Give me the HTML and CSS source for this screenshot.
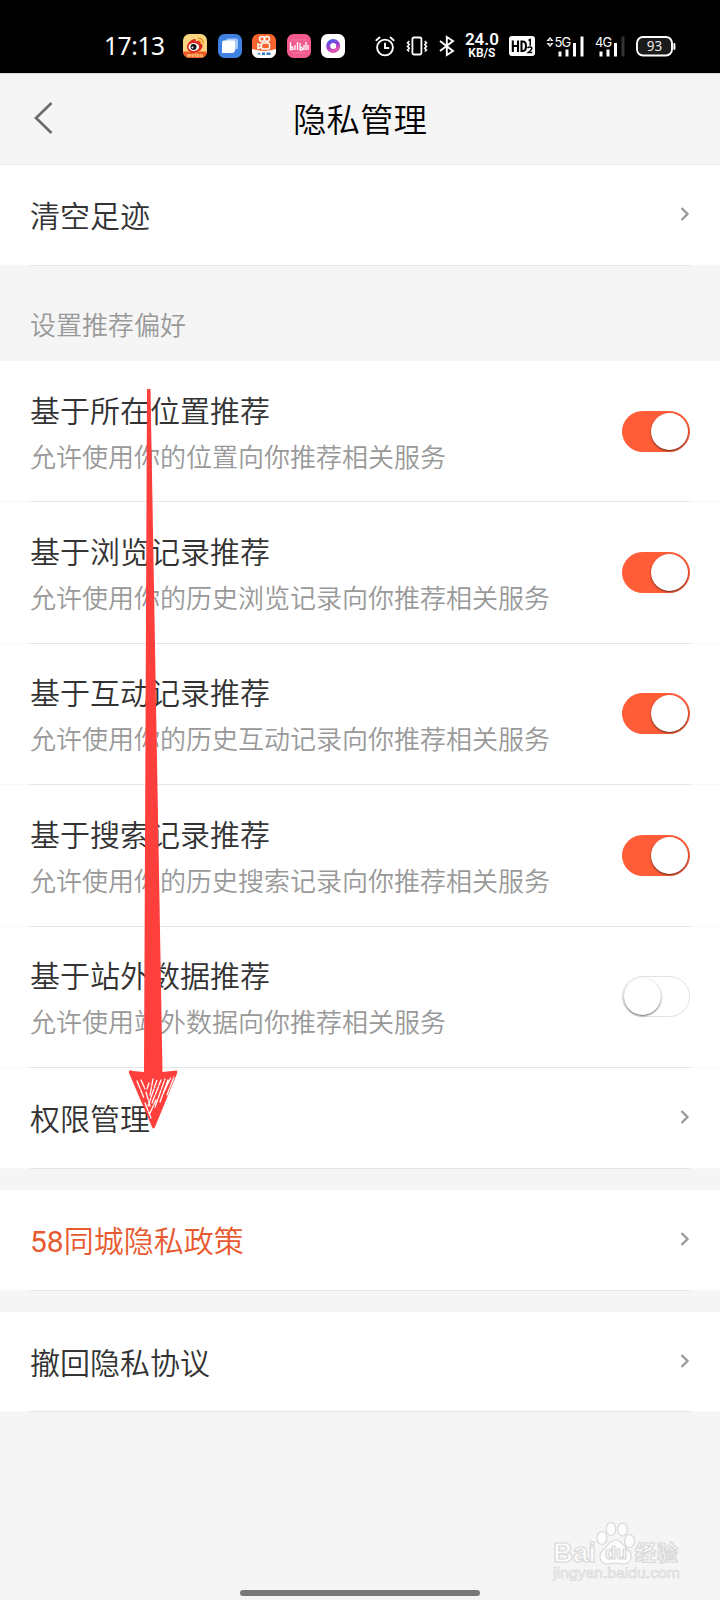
FILE: index.html
```html
<!DOCTYPE html>
<html lang="zh-CN">
<head>
<meta charset="utf-8">
<title>隐私管理</title>
<link rel="stylesheet" href="styles.css">
</head>
<body>
<div class="screen">
  <div class="status">
    <span class="time">17:13</span>
    <div class="apps">
      <svg width="24" height="24" viewBox="0 0 24 24"><defs><clipPath id="r"><rect width="24" height="24" rx="6.5"/></clipPath></defs><g clip-path="url(#r)"><rect width="24" height="24" fill="#fbd580"/><rect y="17.500" width="24" height="7" fill="#ee5a24"/><path d="M4 13c0-4 4-7 7-8 2-.5 2 1 1.500 2.500 3-1.500 5-1 4.500 1.500 3 1 3 3 2 5-1.500 3-5 4.500-8.500 4.500C7 18.500 4 16.500 4 13z" fill="#d9251c"/><ellipse cx="10.800" cy="13" rx="5.300" ry="4" fill="#fff"/><circle cx="10.500" cy="13" r="3" fill="#151515"/><circle cx="9.500" cy="13.500" r="1" fill="#fff"/><path d="M15 4.500c3.500-.5 5.500 2 5 5M15.500 7c1.500 0 2.300 1 2 2.500" fill="none" stroke="#f08c22" stroke-width="1.300"/><text class="tag" x="12" y="22.500" text-anchor="middle">weibo</text></g></svg>
      <svg width="24" height="24" viewBox="0 0 24 24"><rect width="24" height="24" rx="6.500" fill="#3d82e0"/><rect x="8" y="4.500" width="12" height="11" rx="2.500" fill="#a8caf8"/><path d="M6 6.500h9.500q1.500 0 1.500 1.500V16q0 3-3 3H4V8.500Q4 6.500 6 6.500z" fill="#fff"/></svg>
      <svg width="24" height="24" viewBox="0 0 24 24"><g clip-path="url(#r)"><rect width="24" height="24" fill="#f8642d"/><path d="M0 15q12 4 24 0v9H0z" fill="#fff"/><g fill="none" stroke="#fff" stroke-width="1.500"><circle cx="10" cy="5" r="2.400"/><circle cx="15" cy="5" r="2.400"/><rect x="9.500" y="9" width="8" height="6" rx="1.800"/><path d="M9 11l-3-1v4.500l3-1.500"/></g><path d="M5 20.500l2-2 2 2zM10 18.500h3v2.500h-3zM14.500 18.500h4v2.500h-4z" fill="#3478c9"/></g></svg>
      <svg width="24" height="24" viewBox="0 0 24 24"><rect width="24" height="24" rx="6.500" fill="#f45b8d"/><g fill="none" stroke="#fff" stroke-width="1.300"><path d="M3.500 8v7.500h2q2-2-2-3M8 11v5M10.500 8v8M13 9v7h2q2-2-2-3M17 11v5M19 8v8M21 11v5"/><path d="M5 6h14M6 19h12" stroke="#f783aa" stroke-width=".8"/></g></svg>
      <svg width="24" height="24" viewBox="0 0 24 24"><defs><linearGradient id="p" x2=".4" y2="1"><stop stop-color="#4b5ae8"/><stop offset=".6" stop-color="#a23bd2"/><stop offset="1" stop-color="#df54b0"/></linearGradient></defs><rect width="24" height="24" rx="6.500" fill="#fff"/><circle cx="12.200" cy="12" r="5" fill="none" stroke="url(#p)" stroke-width="4"/></svg>
    </div>
    <div class="sys">
      <svg width="20" height="21" viewBox="0 0 20 21" fill="none" stroke="#fff" stroke-width="1.900" stroke-linecap="round"><circle cx="10" cy="11.500" r="7.900"/><path d="M1.300 4.200l3.200-2.700M18.700 4.200l-3.200-2.700M10 7.500v4.500h3.500"/></svg>
      <svg width="22" height="20" viewBox="0 0 22 20" fill="none" stroke="#fff" stroke-width="1.800"><rect x="6.400" y="1.500" width="9" height="17" rx="1.500"/><path d="M3.300 5l-1.800 1.800 1.800 1.800-1.800 1.800 1.800 1.800-1.800 1.800 1.800 1.500M18.700 5l1.800 1.800-1.800 1.800 1.800 1.800-1.800 1.800 1.800 1.800-1.800 1.500" stroke-width="1.500"/></svg>
      <svg width="16" height="20" viewBox="0 0 16 20" fill="none" stroke="#fff" stroke-width="1.900"><path d="M1 5l13 10-6.200 4V1L14 5 1 15"/></svg>
      <div class="speed"><b>24.0</b><span>KB/S</span></div>
      <svg width="26" height="20" viewBox="0 0 26 20"><rect width="26" height="20" rx="3" fill="#fff"/><g fill="none" stroke="#000" stroke-width="2.100"><path d="M3.800 4.500v11.500M9 4.500v11.500M3.800 10H9M12.500 5.500v9.500h1.500q3-.3 3-4.800t-3-4.700z"/><path d="M19.500 4.500l1.700-1v6.200M18.500 12q.8-1 2.300-1 2 0 2 1.500 0 1-3.500 4h4" stroke-width="1.500"/></g></svg>
      <svg width="38" height="21" viewBox="0 0 38 21" fill="#fff"><path d="M.5 5L4 1l3.500 4zM.5 7L4 11l3.500-4z"/><path d="M2.700 4.500L4 3l1.300 1.500zM2.700 7.500L4 9l1.300-1.500z" fill="#000"/><text class="net" x="8.500" y="11">5G</text><path d="M12.500 15.500h3V20.500h-3zM19.500 13.500h3v7h-3zM27 7h3v13.500h-3zM34.500.5h3v20h-3z"/></svg>
      <svg width="30" height="21" viewBox="0 0 30 21" fill="#fff"><text class="net" x="0" y="11">4G</text><path d="M4.500 15.500h3V20.500h-3zM11.500 13.500h3v7h-3zM19 7h3v13.500h-3z"/><path d="M26.500.5h3v20h-3z" fill="#333"/></svg>
      <svg width="40" height="21" viewBox="0 0 40 21"><rect x="1" y="1" width="35" height="18.500" rx="6" fill="#1b1b1b" stroke="#fff" stroke-width="1.900"/><rect x="37.400" y="7" width="2" height="7" rx="1" fill="#fff"/><text class="pct" x="18.500" y="15" text-anchor="middle">93</text></svg>
    </div>
  </div>

  <header class="bar">
    <svg class="back" width="20" height="34" viewBox="0 0 20 34"><path d="M17.500 2L2 17l15.500 15" fill="none" stroke="#6c6c6c" stroke-width="2.700"/></svg>
    <h1>隐私管理</h1>
  </header>

  <div class="row link"><span>清空足迹</span><svg class="chev" width="10" height="14" viewBox="0 0 10 14"><path d="M1.500 1l6 6-6 6"/></svg></div>
  <h2 class="section">设置推荐偏好</h2>
  <div class="row option"><div><p class="name">基于所在位置推荐</p><p class="desc">允许使用你的位置向你推荐相关服务</p></div><i class="switch on"></i></div>
  <div class="row option"><div><p class="name">基于浏览记录推荐</p><p class="desc">允许使用你的历史浏览记录向你推荐相关服务</p></div><i class="switch on"></i></div>
  <div class="row option"><div><p class="name">基于互动记录推荐</p><p class="desc">允许使用你的历史互动记录向你推荐相关服务</p></div><i class="switch on"></i></div>
  <div class="row option"><div><p class="name">基于搜索记录推荐</p><p class="desc">允许使用你的历史搜索记录向你推荐相关服务</p></div><i class="switch on"></i></div>
  <div class="row option"><div><p class="name">基于站外数据推荐</p><p class="desc">允许使用站外数据向你推荐相关服务</p></div><i class="switch"></i></div>
  <div class="row link tall"><span>权限管理</span><svg class="chev" width="10" height="14" viewBox="0 0 10 14"><path d="M1.500 1l6 6-6 6"/></svg></div>
  <div class="row link spaced"><span class="accent"><span class="num">58</span>同城隐私政策</span><svg class="chev" width="10" height="14" viewBox="0 0 10 14"><path d="M1.500 1l6 6-6 6"/></svg></div>
  <div class="row link spaced"><span>撤回隐私协议</span><svg class="chev" width="10" height="14" viewBox="0 0 10 14"><path d="M1.500 1l6 6-6 6"/></svg></div>

  <footer class="foot">
    <svg class="mark" width="130" height="62" viewBox="0 0 130 62">
      <g class="outline">
        <text class="bai" x="0" y="40" textLength="43" lengthAdjust="spacingAndGlyphs">Bai</text>
        <ellipse cx="49" cy="16" rx="5" ry="6.500"/><ellipse cx="58" cy="7" rx="4.800" ry="6.500"/><ellipse cx="69.500" cy="7.500" rx="4.800" ry="6.500"/><ellipse cx="76.500" cy="19" rx="5" ry="6.500"/>
        <path d="M63 18c6 0 8 7 12 10 6 5 3 14-5 14-3 0-4-1-7-1s-5 1-8 1c-9 0-10-9-5-14 4-3 7-10 13-10z"/>
        <text class="du" x="52" y="37" textLength="22">du</text>
        <text class="jing" x="82" y="38" textLength="43">经验</text>
        <text class="url" x="0" y="56" textLength="127" lengthAdjust="spacingAndGlyphs">jingyan.baidu.com</text>
      </g>
    </svg>
    <div class="home"></div>
  </footer>

  <svg class="arrow" width="52" height="742" viewBox="0 0 52 742">
    <path d="M19 0h3.500L34.500 683l13.500-1.500q2 0 1 3L27 738q-1.500 3-3 0L1 684q-1-4 4-2l11 1z" fill="#ff3f3c"/>
    <path d="M9 692l7 17M13 691l4 9M18 703l4 14M21 694l-2 6M22 706l3-16M20 717l9-26M24 714l9-23M27 718l10-28M32 713l8-22M35 705l8-17M39 706l7-18M17 714l6 15M22 724l6-13" fill="none" stroke="#fff" stroke-width="1.300" stroke-linecap="round" stroke-dasharray="8 1.500"/>
  </svg>
</div>
</body>
</html>
```
FILE: styles.css
```css
* { box-sizing: border-box; }
body { margin: 0; background: #f5f5f5; font-family: Roboto, "Noto Sans CJK SC", sans-serif; font-weight: 350; color: #333; }
h1, h2, p { margin: 0; font-weight: 350; }
svg { display: block; flex: none; overflow: visible; }
.screen { position: relative; width: 720px; height: 1600px; display: flex; flex-direction: column; overflow: hidden; }

.status { height: 73px; flex: none; background: #000; color: #fff; display: flex; align-items: center; padding: 19px 0 0 104px; }
.time { width: 79px; font: 400 24.5px/26px "Noto Sans", sans-serif; letter-spacing: -.4px; white-space: nowrap; }
.apps { display: flex; gap: 10.5px; }
.sys { display: flex; align-items: center; gap: 10.8px; margin-left: 30px; }
.speed { width: 35px; margin: 0 -1px; display: flex; flex-direction: column; align-items: center; font-family: Roboto, sans-serif; }
.speed b { font-size: 17px; line-height: 14px; font-weight: 600; }
.speed span { font-size: 12px; line-height: 14px; font-weight: 600; }
.net { font: 400 13px Inter, sans-serif; letter-spacing: -1px; }
.pct { font: 400 13.5px "Noto Sans", sans-serif; fill: #e8e8e8; }
.tag { font: 700 5.5px "Noto Sans", sans-serif; fill: #ffd08a; }

.bar { height: 92px; flex: none; display: grid; grid-template-columns: 1fr auto 1fr; align-items: center; padding: 3px 34px 0; border-top: 1px solid #dcdcdc; border-bottom: 1px solid #ebebeb; }
.back { margin-bottom: 6px; }
.bar h1 { font-size: 33.5px; line-height: 44px; color: #000; }

.row { flex: none; margin: 0; padding: 0 30px; display: flex; align-items: center; justify-content: space-between; font-size: 30px; background: linear-gradient(#e6e6e6, #e6e6e6) 30px 100% / 660px 1px no-repeat, linear-gradient(#f7f7f7, #f7f7f7) 0 100% / 100% 1px no-repeat, #fff; }
.link { height: 100.5px; padding-right: 30px; padding-bottom: 3px; }
.link.tall { height: 101.5px; }
.link.spaced { margin-top: 21px; }
.chev { fill: none; stroke: #999; stroke-width: 2.3; }
.accent { color: #e8592f; }
.num { font-weight: 400; }
.section { height: 95.5px; flex: none; padding: 42.5px 30px 0; font-size: 26px; line-height: 36px; color: #999; }
.option { height: 141.4px; }
.option > div { padding-top: 2px; }
.name { font-size: 30px; line-height: 44px; }
.desc { font-size: 26px; line-height: 36px; margin-top: 6px; color: #999; }
.switch { width: 68px; height: 41px; margin-bottom: 1px; border-radius: 21px; border: 1px solid #e2e2e2; padding: 1px; background: #fff; display: flex; flex: none; }
.switch::before { content: ""; width: 37px; height: 37px; border-radius: 50%; background: #fff; box-shadow: 0 1px 2px rgba(0, 0, 0, .6); }
.switch.on { background: #ff5c38; border-color: #ff5c38; justify-content: flex-end; }

.foot { flex: 1; display: flex; flex-direction: column; justify-content: flex-end; align-items: center; gap: 6px; padding-bottom: 4px; }
.mark { align-self: flex-end; margin-right: 37px; }
.outline { fill: #fdfdfd; stroke: #d8d8d8; stroke-width: 1.2; }
.bai { font: 700 28px "Liberation Sans", sans-serif; }
.du { font: 700 18px "Liberation Sans", sans-serif; }
.jing { font: 700 21px "Noto Sans CJK SC", sans-serif; }
.url { font: 400 14px "Liberation Sans", sans-serif; stroke-width: .7; }
.home { width: 240px; height: 6px; border-radius: 3px; background: #777; }
.arrow { position: absolute; left: 127.5px; top: 389px; }
```
